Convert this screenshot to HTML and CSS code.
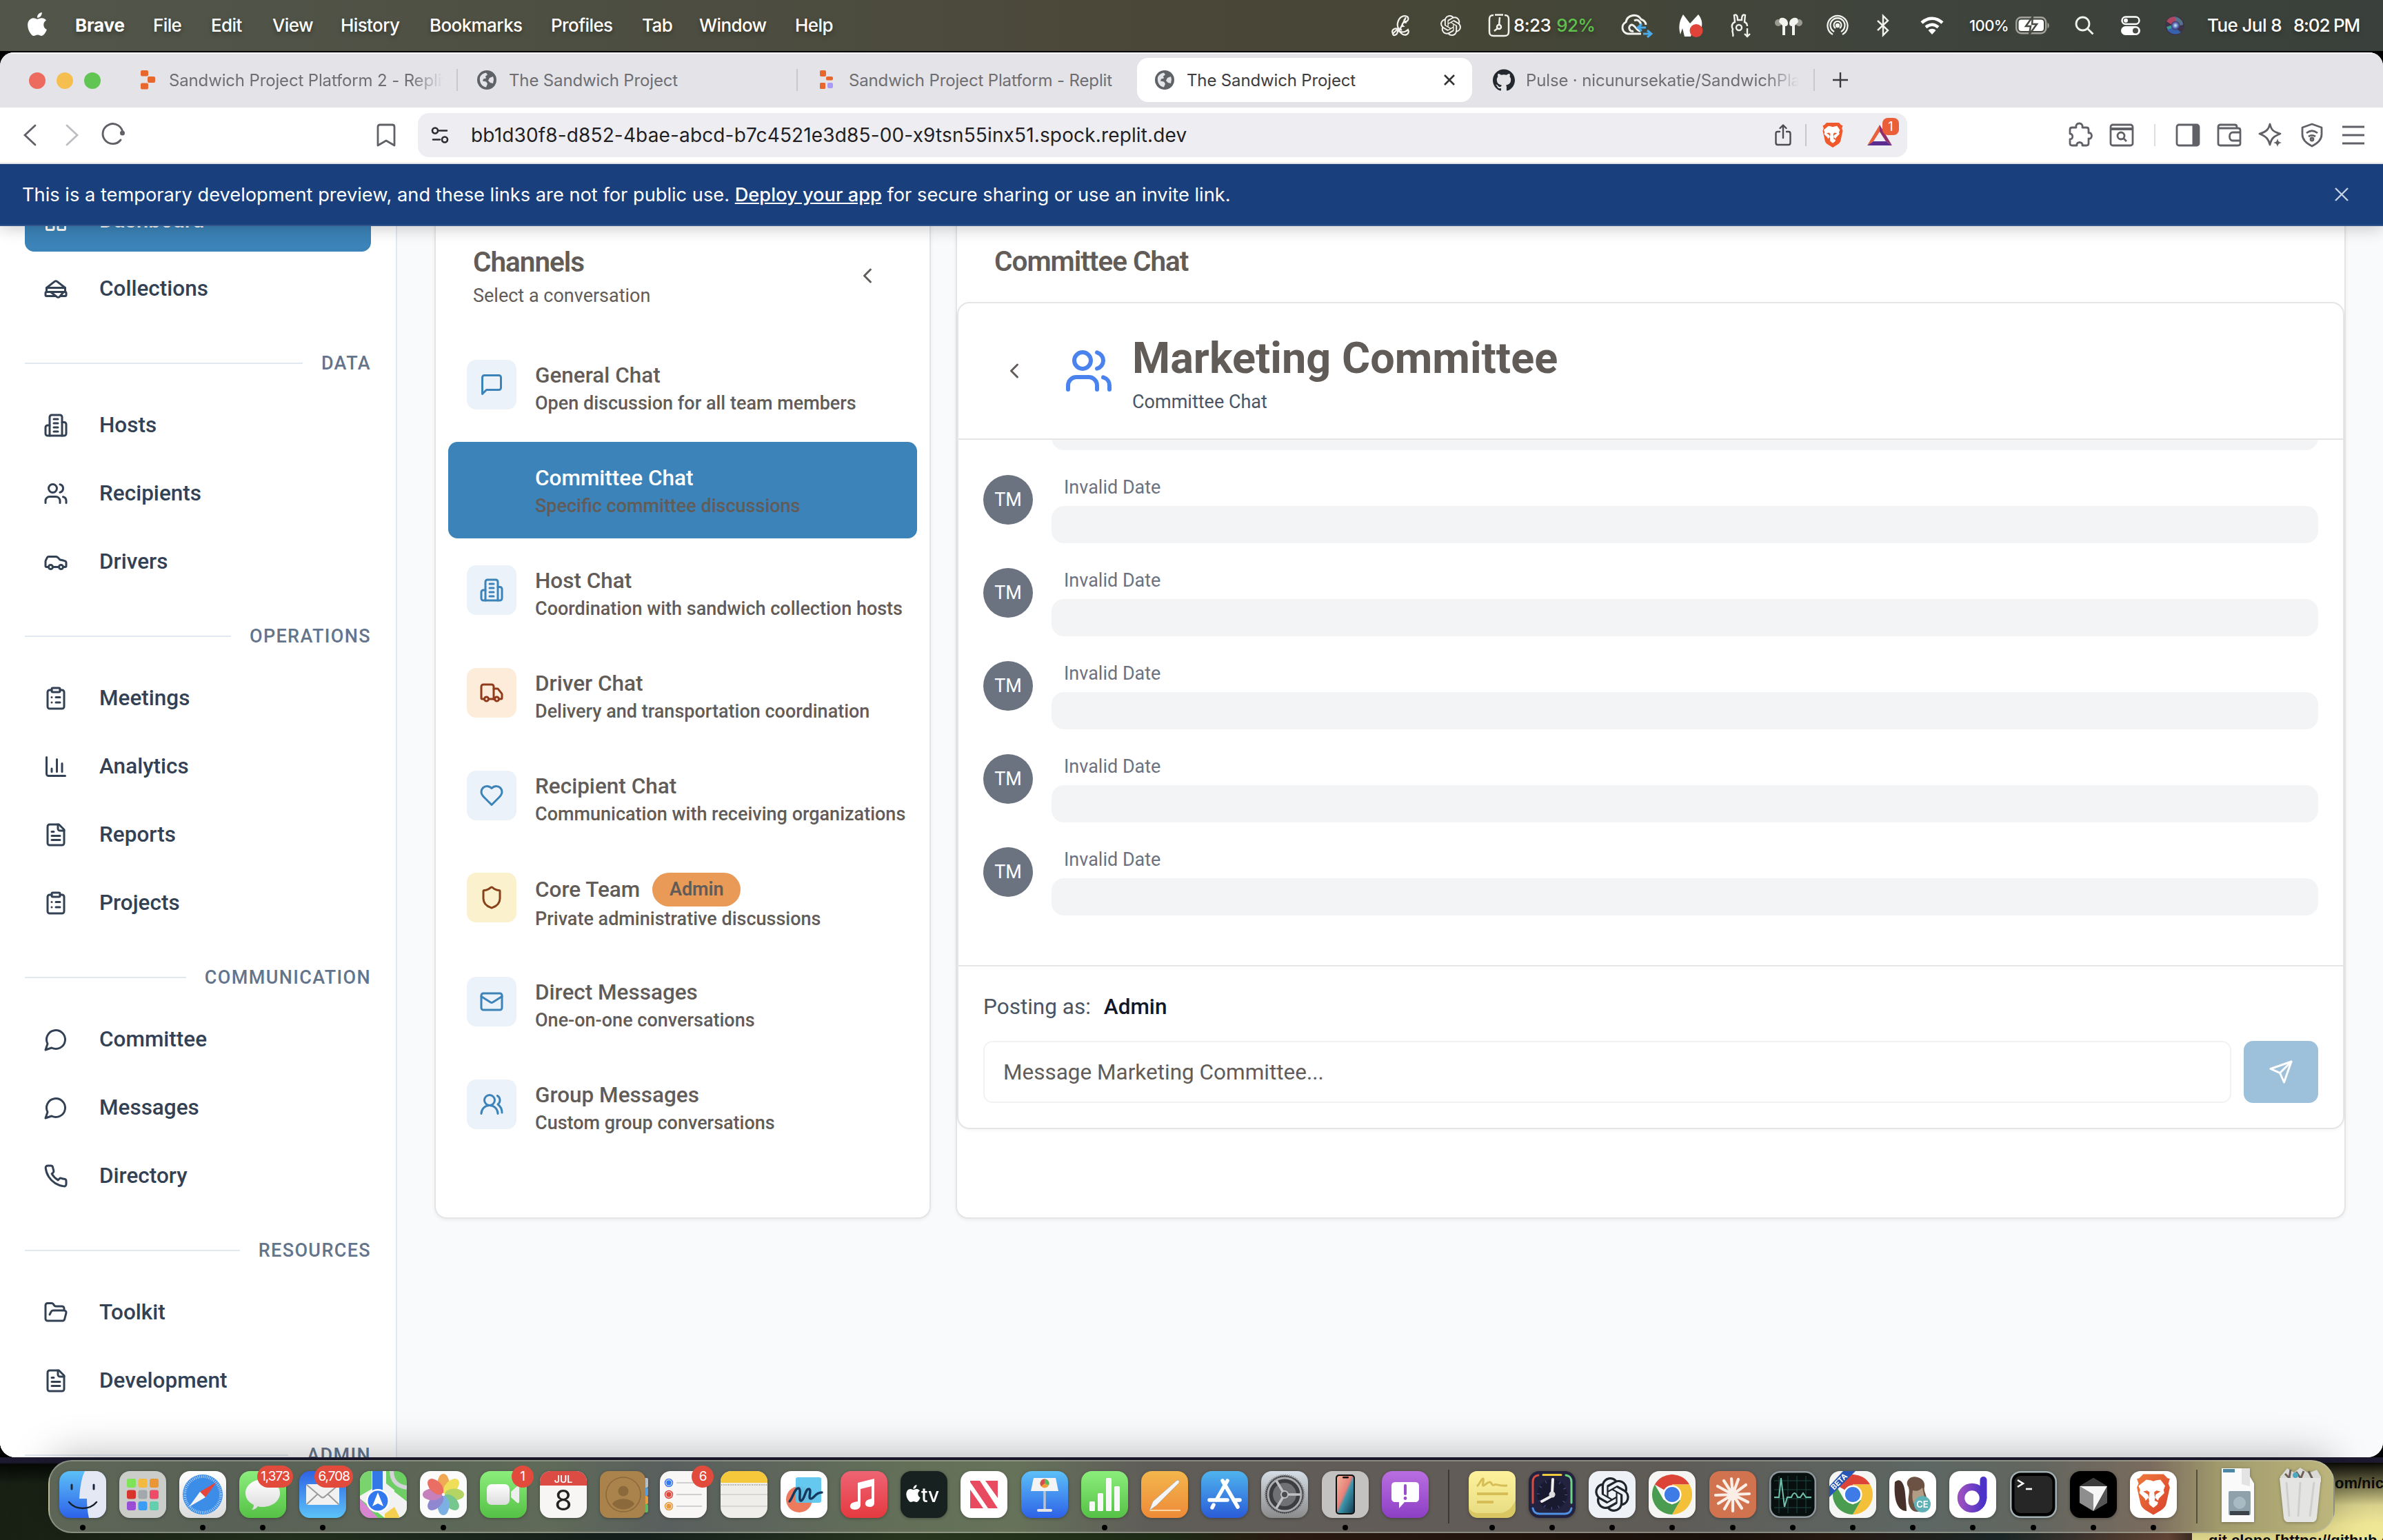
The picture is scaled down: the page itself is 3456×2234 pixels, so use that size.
FILE: index.html
```html
<!DOCTYPE html>
<html lang="en">
<head>
<meta charset="utf-8">
<title>The Sandwich Project</title>
<link rel="stylesheet" href="styles.css">
</head>
<body>
<svg class="defs" width="0" height="0" aria-hidden="true">
  <defs>
    <linearGradient id="gBlue" x1="0" y1="0" x2="0" y2="1"><stop offset="0" stop-color="#5cc0f8"/><stop offset="1" stop-color="#2d62e8"/></linearGradient>
    <linearGradient id="gMail" x1="0" y1="0" x2="0" y2="1"><stop offset="0" stop-color="#2f63e4"/><stop offset="1" stop-color="#5cc3f8"/></linearGradient>
    <linearGradient id="gGreen" x1="0" y1="0" x2="0" y2="1"><stop offset="0" stop-color="#8bee7c"/><stop offset="1" stop-color="#55c145"/></linearGradient>
    <linearGradient id="gWhite" x1="0" y1="0" x2="0" y2="1"><stop offset="0" stop-color="#ffffff"/><stop offset="1" stop-color="#dcdcdc"/></linearGradient>
    <linearGradient id="gRed" x1="0" y1="0" x2="0" y2="1"><stop offset="0" stop-color="#ee6474"/><stop offset="1" stop-color="#e5393f"/></linearGradient>
    <linearGradient id="gOrange" x1="0" y1="0" x2="0" y2="1"><stop offset="0" stop-color="#f3b64c"/><stop offset="1" stop-color="#ee8a38"/></linearGradient>
    <linearGradient id="gPurple" x1="0" y1="0" x2="0" y2="1"><stop offset="0" stop-color="#b96ee0"/><stop offset="1" stop-color="#8d3fc4"/></linearGradient>
    <linearGradient id="gStore" x1="0" y1="0" x2="0" y2="1"><stop offset="0" stop-color="#4fb4ee"/><stop offset="1" stop-color="#2a5cd8"/></linearGradient>
    <linearGradient id="gGrey" x1="0" y1="0" x2="0" y2="1"><stop offset="0" stop-color="#d5dde6"/><stop offset="1" stop-color="#8b8b8b"/></linearGradient>
    <linearGradient id="gSticky" x1="0" y1="0" x2="0" y2="1"><stop offset="0" stop-color="#fdf29b"/><stop offset="1" stop-color="#e9dd84"/></linearGradient>
    <linearGradient id="gD" x1="0" y1="0" x2="1" y2="0"><stop offset="0" stop-color="#9a4fc0"/><stop offset="1" stop-color="#4b32c8"/></linearGradient>
    <linearGradient id="gBrave" x1="0" y1="0" x2="1" y2="1"><stop offset="0" stop-color="#ee7a3c"/><stop offset="1" stop-color="#d9402c"/></linearGradient>
    <linearGradient id="gPhone" x1="0" y1="0" x2="1" y2="1"><stop offset="0" stop-color="#f6b49c"/><stop offset=".45" stop-color="#e58079"/><stop offset=".55" stop-color="#3d96ac"/><stop offset="1" stop-color="#12384e"/></linearGradient>
    <radialGradient id="gSiri"><stop offset="0" stop-color="#ffffff"/><stop offset=".3" stop-color="#8fc0e8"/><stop offset=".65" stop-color="#5560b8"/><stop offset="1" stop-color="#3c3450"/></radialGradient>
    <clipPath id="tile"><rect width="68" height="68" rx="15.5"/></clipPath>
  </defs>
  <symbol id="dash" viewBox="0 0 24 24"><rect x="3" y="3" width="7" height="9" rx="1"/><rect x="14" y="3" width="7" height="5" rx="1"/><rect x="14" y="12" width="7" height="9" rx="1"/><rect x="3" y="16" width="7" height="5" rx="1"/></symbol>
  <symbol id="sandwich" viewBox="0 0 24 24"><path d="M3 11v3a1 1 0 0 0 1 1h16a1 1 0 0 0 1-1v-3"/><path d="M12 19H3a1 1 0 0 1-1-1v-2a1 1 0 0 1 1-1h18a1 1 0 0 1 1 1v2a1 1 0 0 1-1 1h-3.83"/><path d="m3 11 7.770-6.040a2 2 0 0 1 2.460 0L21 11H3Z"/><path d="M12.970 19.770 7 15h12.500l-3.750 4.500a2 2 0 0 1-2.780.270Z"/></symbol>
  <symbol id="building" viewBox="0 0 24 24"><path d="M6 22V4a2 2 0 0 1 2-2h8a2 2 0 0 1 2 2v18Z"/><path d="M6 12H4a2 2 0 0 0-2 2v6a2 2 0 0 0 2 2h2"/><path d="M18 9h2a2 2 0 0 1 2 2v9a2 2 0 0 1-2 2h-2"/><path d="M10 6h4M10 10h4M10 14h4M10 18h4"/></symbol>
  <symbol id="users" viewBox="0 0 24 24"><path d="M16 21v-2a4 4 0 0 0-4-4H6a4 4 0 0 0-4 4v2"/><circle cx="9" cy="7" r="4"/><path d="M22 21v-2a4 4 0 0 0-3-3.87"/><path d="M16 3.13a4 4 0 0 1 0 7.75"/></symbol>
  <symbol id="car" viewBox="0 0 24 24"><path d="M19 17h2c.6 0 1-.4 1-1v-3c0-.9-.7-1.7-1.5-1.9C18.7 10.6 16 10 16 10s-1.3-1.4-2.2-2.3c-.5-.4-1.1-.7-1.8-.7H5c-.6 0-1.1.4-1.4.9l-1.4 2.9A3.7 3.7 0 0 0 2 12v4c0 .6.4 1 1 1h2"/><circle cx="7" cy="17" r="2"/><path d="M9 17h6"/><circle cx="17" cy="17" r="2"/></symbol>
  <symbol id="clip" viewBox="0 0 24 24"><rect x="8" y="2" width="8" height="4" rx="1"/><path d="M16 4h2a2 2 0 0 1 2 2v14a2 2 0 0 1-2 2H6a2 2 0 0 1-2-2V6a2 2 0 0 1 2-2h2"/><path d="M12 11h4M12 16h4M8 11h.01M8 16h.01"/></symbol>
  <symbol id="chart" viewBox="0 0 24 24"><path d="M3 3v16a2 2 0 0 0 2 2h16M18 17V9M13 17V5M8 17v-3"/></symbol>
  <symbol id="file" viewBox="0 0 24 24"><path d="M15 2H6a2 2 0 0 0-2 2v16a2 2 0 0 0 2 2h12a2 2 0 0 0 2-2V7Z"/><path d="M14 2v4a2 2 0 0 0 2 2h4M10 9H8M16 13H8M16 17H8"/></symbol>
  <symbol id="bubble" viewBox="0 0 24 24"><path d="M7.9 20A9 9 0 1 0 4 16.1L2 22Z"/></symbol>
  <symbol id="phone" viewBox="0 0 24 24"><path d="M22 16.92v3a2 2 0 0 1-2.18 2 19.79 19.79 0 0 1-8.63-3.07 19.5 19.5 0 0 1-6-6 19.79 19.79 0 0 1-3.07-8.67A2 2 0 0 1 4.11 2h3a2 2 0 0 1 2 1.72 12.84 12.84 0 0 0 .7 2.81 2 2 0 0 1-.45 2.11L8.09 9.91a16 16 0 0 0 6 6l1.27-1.27a2 2 0 0 1 2.11-.45 12.84 12.84 0 0 0 2.81.7A2 2 0 0 1 22 16.92z"/></symbol>
  <symbol id="folder" viewBox="0 0 24 24"><path d="m6 14 1.5-2.9A2 2 0 0 1 9.24 10H20a2 2 0 0 1 1.94 2.5l-1.54 6a2 2 0 0 1-1.95 1.5H4a2 2 0 0 1-2-2V5a2 2 0 0 1 2-2h3.9a2 2 0 0 1 1.69.9l.81 1.2a2 2 0 0 0 1.67.9H18a2 2 0 0 1 2 2v2"/></symbol>
  <symbol id="square" viewBox="0 0 24 24"><path d="M21 15a2 2 0 0 1-2 2H7l-4 4V5a2 2 0 0 1 2-2h14a2 2 0 0 1 2 2z"/></symbol>
  <symbol id="truck" viewBox="0 0 24 24"><path d="M14 18V6a2 2 0 0 0-2-2H4a2 2 0 0 0-2 2v11a1 1 0 0 0 1 1h2"/><path d="M15 18H9"/><path d="M19 18h2a1 1 0 0 0 1-1v-3.65a1 1 0 0 0-.22-.624l-3.48-4.35A1 1 0 0 0 17.52 8H14"/><circle cx="17" cy="18" r="2"/><circle cx="7" cy="18" r="2"/></symbol>
  <symbol id="heart" viewBox="0 0 24 24"><path d="M19 14c1.49-1.46 3-3.21 3-5.5A5.5 5.5 0 0 0 16.5 3c-1.76 0-3 .5-4.5 2-1.5-1.5-2.74-2-4.5-2A5.5 5.5 0 0 0 2 8.5c0 2.3 1.5 4.05 3 5.5l7 7Z"/></symbol>
  <symbol id="shield" viewBox="0 0 24 24"><path d="M20 13c0 5-3.5 7.5-7.66 8.95a1 1 0 0 1-.67-.01C7.5 20.5 4 18 4 13V6a1 1 0 0 1 1-1c2 0 4.5-1.2 6.24-2.72a1.17 1.17 0 0 1 1.52 0C14.51 3.81 17 5 19 5a1 1 0 0 1 1 1z"/></symbol>
  <symbol id="mail" viewBox="0 0 24 24"><rect x="2" y="4" width="20" height="16" rx="2"/><path d="m22 7-8.97 5.7a1.94 1.94 0 0 1-2.06 0L2 7"/></symbol>
  <symbol id="group" viewBox="0 0 24 24"><path d="M18 21a8 8 0 0 0-16 0"/><circle cx="10" cy="8" r="5"/><path d="M22 20c0-3.37-2-6.5-4-8a5 5 0 0 0-.45-8.3"/></symbol>
  <symbol id="send" viewBox="0 0 24 24"><path d="m22 2-7 20-4-9-9-4Z"/><path d="M22 2 11 13"/></symbol>
  <symbol id="left" viewBox="0 0 24 24"><path d="m15 18-6-6 6-6"/></symbol>
  <symbol id="apple" viewBox="0 0 24 24"><path d="M12.152 6.896c-.948 0-2.415-1.078-3.96-1.04-2.04.027-3.91 1.183-4.961 3.014-2.117 3.675-.546 9.103 1.519 12.09 1.013 1.454 2.208 3.09 3.792 3.039 1.52-.065 2.09-.987 3.935-.987 1.831 0 2.35.987 3.96.948 1.637-.026 2.676-1.48 3.676-2.948 1.156-1.688 1.636-3.325 1.662-3.415-.039-.013-3.182-1.221-3.22-4.857-.026-3.04 2.48-4.494 2.597-4.559-1.429-2.09-3.623-2.324-4.39-2.376-2-.156-3.675 1.09-4.61 1.09zM15.53 3.83c.843-1.012 1.4-2.427 1.245-3.83-1.207.052-2.662.805-3.532 1.818-.78.896-1.454 2.338-1.273 3.714 1.338.104 2.715-.688 3.559-1.701"/></symbol>
  <symbol id="knot" viewBox="0 0 24 24"><path d="M22.2819 9.8211a5.9847 5.9847 0 0 0-.5157-4.9108 6.0462 6.0462 0 0 0-6.5098-2.9A6.0651 6.0651 0 0 0 4.9807 4.1818a5.9847 5.9847 0 0 0-3.9977 2.9 6.0462 6.0462 0 0 0 .7427 7.0966 5.98 5.98 0 0 0 .511 4.9107 6.051 6.051 0 0 0 6.5146 2.9001A5.9847 5.9847 0 0 0 13.2599 24a6.0557 6.0557 0 0 0 5.7718-4.2058 5.9894 5.9894 0 0 0 3.9977-2.9001 6.0557 6.0557 0 0 0-.7475-7.0729zm-9.022 12.6081a4.4755 4.4755 0 0 1-2.8764-1.0408l.1419-.0804 4.7783-2.7582a.7948.7948 0 0 0 .3927-.6813v-6.7369l2.02 1.1686a.071.071 0 0 1 .038.052v5.5826a4.504 4.504 0 0 1-4.4945 4.4944zm-9.6607-4.1254a4.4708 4.4708 0 0 1-.5346-3.0137l.142.0852 4.783 2.7582a.7712.7712 0 0 0 .7806 0l5.8428-3.3685v2.3324a.0804.0804 0 0 1-.0332.0615L9.74 19.9502a4.4992 4.4992 0 0 1-6.1408-1.6464zM2.3408 7.8956a4.485 4.485 0 0 1 2.3655-1.9728V11.6a.7664.7664 0 0 0 .3879.6765l5.8144 3.3543-2.0201 1.1685a.0757.0757 0 0 1-.071 0l-4.8303-2.7865A4.504 4.504 0 0 1 2.3408 7.872zm16.5963 3.8558L13.1038 8.364 15.1192 7.2a.0757.0757 0 0 1 .071 0l4.8303 2.7913a4.4944 4.4944 0 0 1-.6765 8.1042v-5.6772a.79.79 0 0 0-.407-.667zm2.0107-3.0231l-.142-.0852-4.7735-2.7818a.7759.7759 0 0 0-.7854 0L9.409 9.2297V6.8974a.0662.0662 0 0 1 .0284-.0615l4.8303-2.7866a4.4992 4.4992 0 0 1 6.6802 4.66zM8.3065 12.863l-2.02-1.1638a.0804.0804 0 0 1-.038-.0567V6.0742a4.4992 4.4992 0 0 1 7.3757-3.4537l-.142.0805L8.704 5.459a.7948.7948 0 0 0-.3927.6813zm1.0976-2.3654l2.602-1.4998 2.6069 1.4998v2.9994l-2.5974 1.4997-2.6067-1.4997Z"/></symbol>
  <symbol id="github" viewBox="0 0 24 24"><path d="M12 .297c-6.63 0-12 5.373-12 12 0 5.303 3.438 9.8 8.205 11.385.6.113.82-.258.82-.577 0-.285-.01-1.04-.015-2.04-3.338.724-4.042-1.61-4.042-1.61C4.422 18.07 3.633 17.7 3.633 17.7c-1.087-.744.084-.729.084-.729 1.205.084 1.838 1.236 1.838 1.236 1.07 1.835 2.809 1.305 3.495.998.108-.776.417-1.305.76-1.605-2.665-.3-5.466-1.332-5.466-5.93 0-1.31.465-2.38 1.235-3.22-.135-.303-.54-1.523.105-3.176 0 0 1.005-.322 3.3 1.23.96-.267 1.98-.399 3-.405 1.02.006 2.04.138 3 .405 2.28-1.552 3.285-1.23 3.285-1.23.645 1.653.24 2.873.12 3.176.765.84 1.23 1.91 1.23 3.22 0 4.61-2.805 5.625-5.475 5.92.42.36.81 1.096.81 2.22 0 1.606-.015 2.896-.015 3.286 0 .315.21.69.825.57C20.565 22.092 24 17.592 24 12.297c0-6.627-5.373-12-12-12"/></symbol>
  <symbol id="globe" viewBox="0 0 28 28"><circle cx="14" cy="14" r="14" fill="#5f6368"/><path d="M4 10c2-4 5-6 9-6.500l2 3-3 2 1 3-4 1-1 3 5 1 2 3-2 5c-6-1-10-6-9-14.500zM18 11l5-2 1 4-1 6-4-1-3-3z" fill="#e4e3e8"/></symbol>
  <symbol id="lion" viewBox="0 0 44 52"><path d="M9 0h26l5 5 3 1-2 6 2 5-4 18c-1 6-3 8-7 11l-10 6-10-6c-4-3-6-5-7-11L1 17l2-5-2-6 3-1z"/><path fill="#fff" d="M13 7l6 1 3 1 3-1 6-1 6 8-2 5 1 4-7 7-1 3-4-4 1-4 6-4-5-1-3 2 1 8-1 6-3 2-3-2-1-6 1-8-3-2-5 1 6 4 1 4-4 4-1-3-7-7 1-4-2-5zM16 36l6-3 6 3-1 3-5 4-5-4z"/></symbol>
  <symbol id="chrome" viewBox="0 0 60 60"><path fill="#db4437" d="M30 30L4 15a30 30 0 0 1 52 0H30z"/><path fill="#f4c03a" d="M30 30V15h26a30 30 0 0 1-26 45l13-22.500z"/><path fill="#4a9d50" d="M30 60A30 30 0 0 1 4 15l13 22.500L30 45l13-7.500z"/><circle cx="30" cy="30" r="14" fill="#fff"/><circle cx="30" cy="30" r="11.500" fill="#3f7be6"/></symbol>
</svg>

<header class="menubar">
  <nav class="menus">
    <svg class="apple" fill="#fff"><use href="#apple"/></svg>
    <b>Brave</b><span>File</span><span>Edit</span><span>View</span><span>History</span><span>Bookmarks</span><span>Profiles</span><span>Tab</span><span>Window</span><span>Help</span>
  </nav>
  <div class="status">
    <svg width="30" height="32" viewBox="0 0 30 32" fill="none" stroke="#f2f2ee" stroke-width="2.200"><path d="M12 22C7 15 11 3 20 2c8 0 6 9 1 8-3-1-1-4 1-3M23 12c-5-2-8 2-5 5-4 0-5 4-2 6M22 4L12 24M3 28c-3-7 5-10 9-5 2 3 8 4 13-1 3 6-4 10-9 6-3-3-4-5-6-4 0 6-7 8-7 4zM3 28l9-9"/></svg>
    <svg width="30" height="30" fill="#f2f2ee"><use href="#knot"/></svg>
    <div class="timer"><svg width="32" height="34" viewBox="0 0 32 34" fill="none" stroke="#f2f2ee" stroke-width="2.500"><path d="M8 2C3 2 2 4 2 8v18c0 5 2 6 6 6h16c4 0 6-1 6-6V8c0-4-1-6-6-6M10 1.500h12M17 5l-1 12"/><circle cx="16" cy="19" r="3"/><path d="M14 21l-5 4"/></svg><span>8:23</span><span class="pct">92%</span></div>
    <svg width="46" height="34" viewBox="0 0 46 34" fill="none" stroke="#f2f2ee" stroke-width="3"><path d="M30 29H11a9 9 0 0 1-3-17A12 12 0 0 1 30 8c5 2 7 5 7 8M19 25c-6 2-9-7-3-9 5-1 7 9 13 9M20 10c5-3 9 1 10 6"/><path d="M27 20h10M33 29h10M31 15l-6 5 6 5M39 24l6 5-6 5" stroke="#4aa9e8"/></svg>
    <svg width="36" height="34" viewBox="0 0 36 34"><path fill="#fff" d="M3 30C-1 17 3 8 7 1l10 13L29 1c5 6 6 12 5 18H22l-4 14H9L6 21z"/><circle cx="26" cy="24.500" r="9.500" fill="#e04438"/></svg>
    <svg width="32" height="36" viewBox="0 0 32 36" fill="none" stroke="#f2f2ee" stroke-width="2.400"><path d="M5 34c2-4-2-6 0-11-3-5 0-9 3-10L7 3c4-2 5 2 5 7h6c0-5 1-9 5-7l-1 10c3 1 4 4 4 6"/><circle cx="14" cy="21" r="4"/><path d="M10 16h.1M19 16h.1M26 22v11M22 30l4 4 4-4"/></svg>
    <svg width="40" height="30" viewBox="0 0 40 30" fill="#f2f2ee"><circle cx="5" cy="11" r="5" fill="#9a9a90"/><circle cx="35" cy="11" r="5" fill="#9a9a90"/><path d="M7 5a8 8 0 0 1 12 7c0 3-2 4-4 4v13h-4V15L6 10zM33 5a8 8 0 0 0-12 7c0 3 2 4 4 4v13h4V15l5-5z"/></svg>
    <svg width="32" height="32" viewBox="0 0 32 32" fill="none" stroke="#f2f2ee" stroke-width="2.300"><path d="M9 29A14.500 14.500 0 1 1 23 29M11 25a10.500 10.500 0 1 1 10 0M13 20a5.500 5.500 0 1 1 6 0"/><circle cx="16" cy="16" r="2" fill="#f2f2ee"/></svg>
    <svg width="20" height="32" viewBox="0 0 20 32" fill="none" stroke="#f2f2ee" stroke-width="2.400"><path d="M2 9l15 14-7 7V2l7 7L2 23"/></svg>
    <svg width="34" height="26" viewBox="0 0 34 26" fill="none" stroke="#fff" stroke-width="4.500"><path d="M2 9c9-8.500 21-8.500 30 0M8 15.500c6-5 12-5 18 0"/><path fill="#fff" stroke="none" d="M17 26l-5.500-6c3-3 8-3 11 0z"/></svg>
    <div class="batt"><span>100%</span><svg width="50" height="26" viewBox="0 0 50 26"><rect x="1.200" y="1.200" width="43" height="23" rx="7" fill="none" stroke="#a4a49c" stroke-width="2.400"/><rect x="4.500" y="4.500" width="36.500" height="16.500" rx="4" fill="#fff"/><path d="M46.500 9v8c3-1 3-7 0-8z" fill="#a4a49c"/><path d="M25 0L15 14h7l-2 12 11-15h-7z" fill="#fff" stroke="#454a42" stroke-width="2.500"/></svg></div>
    <svg width="28" height="28" viewBox="0 0 28 28" fill="none" stroke="#f2f2ee" stroke-width="2.800"><circle cx="11.500" cy="11.500" r="9.500"/><path d="M18.500 18.500l8 8"/></svg>
    <svg width="28" height="28" viewBox="0 0 28 28"><rect x="1.500" y="1.500" width="25" height="10.500" rx="5.200" fill="none" stroke="#fff" stroke-width="2.500"/><circle cx="7" cy="6.800" r="3" fill="#fff"/><rect y="15" width="28" height="13" rx="6.500" fill="#fff"/><circle cx="21" cy="21.500" r="4" fill="#454a42"/></svg>
    <svg width="28" height="28" viewBox="0 0 28 28"><circle cx="14" cy="14" r="14" fill="#3c3446"/><path d="M2 8A14 14 0 0 1 14 1l4 10-8 2z" fill="#d84c6c" opacity=".75"/><path d="M14 1c7 1 12 6 12 12l-8 2z" fill="#5d8fa8" opacity=".7"/><path d="M3 20l8-6 12 10a14 14 0 0 1-20-4z" fill="#3566b8" opacity=".9"/><path d="M2 16l9-3 2 3-9 4z" fill="#3fb5a0" opacity=".8"/><circle cx="15" cy="14" r="6.500" fill="url(#gSiri)" opacity=".9"/></svg>
    <div class="date"><span>Tue Jul 8</span><span class="clock">8:02 PM</span></div>
  </div>
</header>

<main class="window">
  <div class="tabstrip">
    <div class="lights"><i class="red"></i><i class="yel"></i><i class="grn"></i></div>
    <div class="tab first"><svg width="32" height="28" viewBox="0 0 32 28" fill="#e8672c"><rect x="5" width="11" height="8.500" rx="2"/><rect x="15" y="9" width="11" height="9" rx="2"/><rect x="5" y="18.500" width="11" height="9" rx="2"/></svg><span class="fade">Sandwich Project Platform 2 - Replit</span></div>
    <div class="tab sep"><svg width="28" height="28"><use href="#globe"/></svg><span>The Sandwich Project</span></div>
    <div class="tab sep"><svg width="28" height="28" viewBox="0 0 28 28" fill="#e8672c"><rect x="4" width="9" height="9" rx="2"/><rect x="13" y="9" width="10" height="5.500" rx="2"/><rect x="4" y="18" width="8" height="9" rx="1.500"/><rect x="15" y="18" width="8" height="8" rx="2" fill="#a99af5"/></svg><span>Sandwich Project Platform - Replit</span></div>
    <div class="tab active"><svg width="28" height="28"><use href="#globe"/></svg><span>The Sandwich Project</span><svg class="x" width="16" height="16" viewBox="0 0 16 16" fill="none" stroke="#333" stroke-width="2.600"><path d="M1 1l14 14M15 1L1 15"/></svg></div>
    <div class="tab last"><svg width="32" height="32" fill="#24292f"><use href="#github"/></svg><span class="fade">Pulse · nicunursekatie/SandwichPlatform</span></div>
    <svg class="plus" width="22" height="22" viewBox="0 0 22 22" stroke="#3a3a3e" stroke-width="2.400"><path d="M11 0v22M0 11h22"/></svg>
  </div>
  <div class="toolbar">
    <div class="navs">
      <svg width="60" height="36" viewBox="0 0 60 36" fill="none" stroke="#5f6166" stroke-width="2.800" stroke-linecap="round"><path d="M37 4L22 18l15 14"/></svg>
      <svg width="60" height="36" viewBox="0 0 60 36" fill="none" stroke="#bdbdc2" stroke-width="2.800" stroke-linecap="round"><path d="M23 4l15 14-15 14"/></svg>
      <svg width="60" height="36" viewBox="0 0 60 36" fill="none" stroke="#5f6166" stroke-width="2.900" stroke-linecap="round"><path d="M41 25a14.500 14.500 0 1 1 3-10"/><circle cx="43.500" cy="15" r="3.500" fill="#5f6166" stroke="none"/></svg>
    </div>
    <svg class="bm" width="28" height="34" viewBox="0 0 28 34" fill="none" stroke="#5f6166" stroke-width="2.800" stroke-linejoin="round"><path d="M2 32V5c0-2 1-3 3-3h18c2 0 3 1 3 3v27L14 25z"/></svg>
    <div class="url">
      <svg width="26" height="24" viewBox="0 0 26 24" fill="none" stroke="#2b2b30" stroke-width="2.600" stroke-linecap="round"><circle cx="6" cy="5.500" r="4"/><path d="M12 5.500h11M3 18.500h10"/><circle cx="20" cy="18.500" r="4"/></svg>
      <span class="addr">bb1d30f8-d852-4bae-abcd-b7c4521e3d85-00-x9tsn55inx51.spock.replit.dev</span>
      <svg class="share" width="24" height="32" viewBox="0 0 24 32" fill="none" stroke="#4a4c52" stroke-width="2.400" stroke-linecap="round" stroke-linejoin="round"><path d="M7 11H4c-2 0-2.500 1-2.500 3v13c0 2 .5 3 2.500 3h16c2 0 2.500-1 2.500-3V14c0-2-.5-3-2.500-3h-3M12 20V2M7.500 6L12 1.500 16.500 6"/></svg>
      <i class="bar"></i>
      <svg class="lion" width="32" height="36" fill="#f0592b"><use href="#lion"/></svg>
      <span class="bat"><svg width="36" height="30" viewBox="0 0 36 30"><path fill="#e9613b" d="M18 0L0 30l9-6 9-14z"/><path fill="#8f2f6b" d="M18 0l18 30-9-6-9-14z"/><path fill="#5c2d91" d="M0 30l9-6h18l9 6z"/></svg><em>1</em></span>
    </div>
    <div class="exts">
      <svg width="36" height="36" viewBox="0 0 36 36"><path d="M3 10c0-2 1-3 3-3h6c-2-8 11-8 9 0h6c2 0 3 1 3 3v5c6-2 6 10 0 8v7c0 2-1 3-3 3h-6c1-6-9-6-8 0H6c-2 0-3-1-3-3v-6c5 0 5-8 0-8z"/></svg>
      <svg width="36" height="36" viewBox="0 0 36 36"><rect x="2" y="3" width="32" height="30" rx="3"/><path d="M2 9h32" stroke-width="4"/><circle cx="17" cy="19" r="5"/><path d="M21 23l4 4"/></svg>
      <i class="bar"></i>
      <svg width="36" height="36" viewBox="0 0 36 36"><rect x="2" y="3" width="32" height="30" rx="3"/><path d="M29 4v28" stroke-width="9"/></svg>
      <svg width="36" height="36" viewBox="0 0 36 36"><path d="M34 14v-3c0-2-1-3-3-3H2V6c0-2 1-3 3-3h21c2 0 3 1 3 3v2M2 8v22c0 2 1 3 3 3h26c2 0 3-1 3-3v-3M34 14H23c-6 0-6 12 0 12h11z"/></svg>
      <svg width="36" height="36" viewBox="0 0 36 36"><path d="M17 2c2 8 4 11 15 14-11 4-13 8-15 16-2-8-5-12-15-16C12 13 15 10 17 2z"/><path d="M28 23c1 4 2 5 6 6-4 1-5 2-6 6-1-4-2-5-6-6 4-1 5-2 6-6z" fill="#5f6166" stroke="none"/></svg>
      <svg width="36" height="36" viewBox="0 0 36 36"><path d="M18 2l14 5v10c0 8-6 13-14 17C10 30 4 25 4 17V7z"/><path d="M10 15c5-4 11-4 16 0M13 20c3-2 7-2 10 0"/><circle cx="18" cy="24" r="2"/></svg>
      <svg width="36" height="36" viewBox="0 0 36 36"><path d="M2 6h32M2 18h32M2 30h32"/></svg>
    </div>
  </div>

  <div class="page">
    <div class="banner"><p>This is a temporary development preview, and these links are not for public use. <a>Deploy your app</a> for secure sharing or use an invite link.</p><svg width="20" height="20" viewBox="0 0 20 20" stroke="#c6d2e4" stroke-width="2.400"><path d="M1 1l18 18M19 1L1 19"/></svg></div>
    <aside class="side">
      <a class="item on"><svg class="ic"><use href="#dash"/></svg>Dashboard</a>
      <a class="item"><svg class="ic"><use href="#sandwich"/></svg>Collections</a>
      <h6>DATA</h6>
      <a class="item"><svg class="ic"><use href="#building"/></svg>Hosts</a>
      <a class="item"><svg class="ic"><use href="#users"/></svg>Recipients</a>
      <a class="item"><svg class="ic"><use href="#car"/></svg>Drivers</a>
      <h6>OPERATIONS</h6>
      <a class="item"><svg class="ic"><use href="#clip"/></svg>Meetings</a>
      <a class="item"><svg class="ic"><use href="#chart"/></svg>Analytics</a>
      <a class="item"><svg class="ic"><use href="#file"/></svg>Reports</a>
      <a class="item"><svg class="ic"><use href="#clip"/></svg>Projects</a>
      <h6>COMMUNICATION</h6>
      <a class="item"><svg class="ic"><use href="#bubble"/></svg>Committee</a>
      <a class="item"><svg class="ic"><use href="#bubble"/></svg>Messages</a>
      <a class="item"><svg class="ic"><use href="#phone"/></svg>Directory</a>
      <h6>RESOURCES</h6>
      <a class="item"><svg class="ic"><use href="#folder"/></svg>Toolkit</a>
      <a class="item"><svg class="ic"><use href="#file"/></svg>Development</a>
      <h6>ADMIN</h6>
    </aside>
    <section class="content">
      <div class="card channels">
        <div class="chead"><div><h3>Channels</h3><p>Select a conversation</p></div><svg class="ic"><use href="#left"/></svg></div>
        <div class="rows">
          <div class="row"><span class="box"><svg class="ic"><use href="#square"/></svg></span><div><h4>General Chat</h4><p>Open discussion for all team members</p></div></div>
          <div class="row sel"><span class="box"></span><div><h4>Committee Chat</h4><p>Specific committee discussions</p></div></div>
          <div class="row"><span class="box"><svg class="ic"><use href="#building"/></svg></span><div><h4>Host Chat</h4><p>Coordination with sandwich collection hosts</p></div></div>
          <div class="row"><span class="box orange"><svg class="ic"><use href="#truck"/></svg></span><div><h4>Driver Chat</h4><p>Delivery and transportation coordination</p></div></div>
          <div class="row"><span class="box"><svg class="ic"><use href="#heart"/></svg></span><div><h4>Recipient Chat</h4><p>Communication with receiving organizations</p></div></div>
          <div class="row"><span class="box yellow"><svg class="ic"><use href="#shield"/></svg></span><div><h4>Core Team <span class="badge">Admin</span></h4><p>Private administrative discussions</p></div></div>
          <div class="row"><span class="box"><svg class="ic"><use href="#mail"/></svg></span><div><h4>Direct Messages</h4><p>One-on-one conversations</p></div></div>
          <div class="row"><span class="box"><svg class="ic"><use href="#group"/></svg></span><div><h4>Group Messages</h4><p>Custom group conversations</p></div></div>
        </div>
      </div>
      <div class="card chat">
        <h3>Committee Chat</h3>
        <div class="inner">
          <div class="ihead"><svg class="ic"><use href="#left"/></svg><svg class="ic big"><use href="#users"/></svg><div><h2>Marketing Committee</h2><p>Committee Chat</p></div></div>
          <div class="msgs">
            <div class="msg"><span class="av">TM</span><div><small>Invalid Date</small><p></p></div></div>
            <div class="msg"><span class="av">TM</span><div><small>Invalid Date</small><p></p></div></div>
            <div class="msg"><span class="av">TM</span><div><small>Invalid Date</small><p></p></div></div>
            <div class="msg"><span class="av">TM</span><div><small>Invalid Date</small><p></p></div></div>
            <div class="msg"><span class="av">TM</span><div><small>Invalid Date</small><p></p></div></div>
            <div class="msg"><span class="av">TM</span><div><small>Invalid Date</small><p></p></div></div>
          </div>
          <div class="compose">
            <div class="as"><span>Posting as:</span><b>Admin</b></div>
            <div class="line"><div class="input">Message Marketing Committee...</div><div class="btn"><svg class="ic"><use href="#send"/></svg></div></div>
          </div>
        </div>
      </div>
    </section>
  </div>
</main>

<div class="desk"><div class="sticky"><p>om/nicunurse</p><p class="git">git clone [https://github.com</p></div></div>

<footer class="dock">
  <div class="app run"><svg viewBox="0 0 68 68"><g clip-path="url(#tile)"><rect width="68" height="68" fill="url(#gBlue)"/><path d="M37 0h31v68H43c-2-8-3-18-3-28H29C30 25 32 10 37 0z" fill="#e3e8f4"/></g><path d="M18 20v6M50 20v6" stroke="#1c2838" stroke-width="3" stroke-linecap="round"/><path d="M14 45c10 12 30 12 40 0" fill="none" stroke="#14202e" stroke-width="2.500" stroke-linecap="round"/></svg></div>
  <div class="app"><svg viewBox="0 0 68 68"><rect width="68" height="68" rx="15.500" fill="#cbcdcb"/><g><rect x="11" y="11" width="13" height="13" rx="3" fill="#7ee357"/><rect x="27.500" y="11" width="13" height="13" rx="3" fill="#f4b93f"/><rect x="44" y="11" width="13" height="13" rx="3" fill="#ea9634"/><rect x="11" y="27.500" width="13" height="13" rx="3" fill="#d8362c"/><rect x="27.500" y="27.500" width="13" height="13" rx="3" fill="#a3a8ac"/><rect x="44" y="27.500" width="13" height="13" rx="3" fill="#ee4d68"/><rect x="11" y="44" width="13" height="13" rx="3" fill="#9a4ed6"/><rect x="27.500" y="44" width="13" height="13" rx="3" fill="#3d9cf4"/><rect x="44" y="44" width="13" height="13" rx="3" fill="#62cfae"/></g></svg></div>
  <div class="app run"><svg viewBox="0 0 68 68"><rect width="68" height="68" rx="15.500" fill="url(#gWhite)"/><circle cx="34" cy="34" r="29" fill="#3b8de8"/><circle cx="34" cy="34" r="26" fill="none" stroke="#cfe4fa" stroke-width="4" stroke-dasharray=".8 1.920"/><path d="M54 16L38 38l-8-8z" fill="#e8453a"/><path d="M14 52l16-22 8 8z" fill="#f3f3f3"/></svg></div>
  <div class="app run"><svg viewBox="0 0 68 68"><rect width="68" height="68" rx="15.500" fill="url(#gGreen)"/><path d="M34 12c14 0 25 9 25 20S48 52 34 52c-3 0-5 0-7-1-2 3-5 5-9 5 2-2 3-4 3-7C13 45 9 39 9 32c0-11 11-20 25-20z" fill="url(#gWhite)"/></svg><em>1,373</em></div>
  <div class="app run"><svg viewBox="0 0 68 68"><rect width="68" height="68" rx="15.500" fill="url(#gMail)"/><rect x="10" y="19" width="48" height="30" rx="3" fill="#f1f1f1"/><path d="M11 20l20 17c2 2 4 2 6 0l20-17M11 48l16-15M57 48L41 33" fill="none" stroke="#9b9b9b" stroke-width="2"/></svg><em>6,708</em></div>
  <div class="app"><svg viewBox="0 0 68 68"><g clip-path="url(#tile)"><rect width="68" height="68" fill="#6bcf62"/><path d="M18 0h32v30l18 14v24H36L0 40V0z" fill="#f2f2f2"/><path d="M0 0h17v26L0 36z" fill="#7ad46e"/><path d="M38 0h14l4 10 12 10v22L38 18z" fill="#6fce66"/><path d="M0 40l26 28H0z" fill="#d886d2"/><path d="M36 62l14-10 8 16H36z" fill="#f5cf4e"/><path d="M18 0h15v30H18z" fill="#3478e8"/><path d="M46 0c0 14 8 22 22 24" fill="none" stroke="#d3d3d8" stroke-width="6"/></g><circle cx="26" cy="43" r="17" fill="#fff"/><circle cx="26" cy="43" r="14.500" fill="#3478f0"/><path d="M26 31l8 20-8-4-8 4z" fill="#fff"/></svg></div>
  <div class="app run"><svg viewBox="0 0 68 68"><rect width="68" height="68" rx="15.500" fill="#fbfbfb"/><g opacity=".85"><ellipse cx="34" cy="18" rx="8.500" ry="14" fill="#f09a38"/><ellipse cx="34" cy="18" rx="8.500" ry="14" fill="#ecd93c" transform="rotate(45 34 34)"/><ellipse cx="34" cy="18" rx="8.500" ry="14" fill="#a8cf4a" transform="rotate(90 34 34)"/><ellipse cx="34" cy="18" rx="8.500" ry="14" fill="#5fbd7e" transform="rotate(135 34 34)"/><ellipse cx="34" cy="18" rx="8.500" ry="14" fill="#66a3df" transform="rotate(180 34 34)"/><ellipse cx="34" cy="18" rx="8.500" ry="14" fill="#7d75c9" transform="rotate(225 34 34)"/><ellipse cx="34" cy="18" rx="8.500" ry="14" fill="#bd6bb0" transform="rotate(270 34 34)"/><ellipse cx="34" cy="18" rx="8.500" ry="14" fill="#e8564a" transform="rotate(315 34 34)"/></g></svg></div>
  <div class="app"><svg viewBox="0 0 68 68"><rect width="68" height="68" rx="15.500" fill="url(#gGreen)"/><rect x="10" y="19" width="33" height="30" rx="7" fill="url(#gWhite)"/><path d="M45 30l9-8c2-1 3 0 3 2v20c0 2-1 3-3 2l-9-8z" fill="#eee"/></svg><em>1</em></div>
  <div class="app"><svg viewBox="0 0 68 68"><rect width="68" height="68" rx="15.500" fill="#f7f6f4"/><path d="M0 21V15.500A15.500 15.500 0 0 1 15.500 0h37A15.500 15.500 0 0 1 68 15.500V21z" fill="#dc4c45"/><text x="34" y="16.500" class="t" font-size="14" font-weight="600" fill="#fff" text-anchor="middle">JUL</text><text x="34" y="57" class="t" font-size="41" fill="#222" text-anchor="middle">8</text></svg></div>
  <div class="app"><svg viewBox="0 0 68 68"><rect x="55" y="10" width="15" height="14" rx="2" fill="#b9c0c4"/><rect x="55" y="24" width="15" height="12" rx="2" fill="#5a9bd8"/><rect x="55" y="36" width="15" height="12" rx="2" fill="#e89a3c"/><rect x="55" y="48" width="15" height="12" rx="2" fill="#62b85c"/><rect width="66" height="68" rx="13" fill="#a9824c"/><circle cx="34" cy="34" r="25" fill="none" stroke="#8b693a" stroke-width="1.500"/><circle cx="34" cy="29" r="7.500" fill="#8b693a"/><path d="M18 48c3-10 29-10 32 0-8 10-24 10-32 0z" fill="#8b693a"/></svg></div>
  <div class="app"><svg viewBox="0 0 68 68"><rect width="68" height="68" rx="15.500" fill="#f8f7f5"/><g fill="none" stroke-width="1.500"><circle cx="13" cy="17" r="5.500" stroke="#3478f0"/><circle cx="13" cy="34" r="5.500" stroke="#e0453a"/><circle cx="13" cy="51" r="5.500" stroke="#e89a3c"/></g><circle cx="13" cy="17" r="3.700" fill="#3478f0"/><circle cx="13" cy="34" r="3.700" fill="#e0453a"/><circle cx="13" cy="51" r="3.700" fill="#e89a3c"/><path d="M24 17h37M24 34h37M24 51h37" stroke="#c4c4c4" stroke-width="1.500"/></svg><em>6</em></div>
  <div class="app"><svg viewBox="0 0 68 68"><rect width="68" height="68" rx="15.500" fill="#efeeea"/><path d="M0 17V15.500A15.500 15.500 0 0 1 15.500 0h37A15.500 15.500 0 0 1 68 15.500V17z" fill="#f5c83c"/><path d="M1 20h66" stroke="#999" stroke-width="2" stroke-dasharray="1 1.500"/><path d="M0 34h68M0 51h68" stroke="#d0d0cc" stroke-width="1.500"/></svg></div>
  <div class="app"><svg viewBox="0 0 68 68"><rect width="68" height="68" rx="15.500" fill="#fff"/><circle cx="27" cy="41" r="19" fill="#ee7a5e"/><rect x="22" y="9" width="37" height="37" rx="3" fill="#58c4ee" opacity=".92"/><path d="M13 44c5-6 8-20 13-19s-1 19 4 18 6-18 11-17-2 14 3 14 6-9 16-9" fill="none" stroke="#163a5e" stroke-width="3.500" stroke-linecap="round"/></svg></div>
  <div class="app"><svg viewBox="0 0 68 68"><rect width="68" height="68" rx="15.500" fill="url(#gRed)"/><path d="M25 17l24-6v35c0 4-3 6-7 6s-7-3-6-6c1-4 5-5 9-6V22l-16 4v23c0 4-3 7-8 7s-8-3-7-6c1-4 5-5 11-6z" fill="#fff"/></svg></div>
  <div class="app"><svg viewBox="0 0 68 68"><rect width="68" height="68" rx="15.500" fill="#17211f"/><svg x="6" y="20" width="25" height="25" fill="#fff"><use href="#apple"/></svg><text x="30" y="45" class="t" font-size="28" font-weight="500" fill="#fff">tv</text></svg></div>
  <div class="app"><svg viewBox="0 0 68 68"><rect width="68" height="68" rx="15.500" fill="#fff"/><path d="M14 14h14l26 40H40L14 16zM36 14h18v25zM14 27v27h19z" fill="#e84a5f"/></svg></div>
  <div class="app"><svg viewBox="0 0 68 68"><rect width="68" height="68" rx="15.500" fill="url(#gBlue)"/><path d="M18 10h32l4 19H14z" fill="#f4f4f4"/><circle cx="34" cy="18" r="6.500" fill="#f0a03c"/><path d="M34 18v-6.500a6.500 6.500 0 0 1 6 9z" fill="#5db85c"/><path d="M34 18l-5 4a6.500 6.500 0 0 1 5-10.500z" fill="#d6504a"/><path d="M34 29v27" stroke="#b9c4cf" stroke-width="3.500"/><rect x="23" y="55" width="22" height="4" rx="2" fill="#e6e6e6"/></svg></div>
  <div class="app run"><svg viewBox="0 0 68 68"><rect width="68" height="68" rx="15.500" fill="url(#gGreen)"/><g fill="#f8f8f8"><rect x="12" y="44" width="8" height="14" rx="1.500"/><rect x="24" y="32" width="8" height="26" rx="1.500"/><rect x="36" y="10" width="8" height="48" rx="1.500"/><rect x="48" y="22" width="8" height="36" rx="1.500"/></g></svg></div>
  <div class="app"><svg viewBox="0 0 68 68"><rect width="68" height="68" rx="15.500" fill="url(#gOrange)"/><path d="M12 57h45" stroke="#fbd5a4" stroke-width="2"/><path d="M12 57l5-13 33-29c3-3 6-2 5 2L22 50z" fill="#f6f6f6" stroke="#aaa" stroke-width=".8"/></svg></div>
  <div class="app"><svg viewBox="0 0 68 68"><rect width="68" height="68" rx="15.500" fill="url(#gStore)"/><path d="M31 14l22 38M38 14L22 42M12 42h26M47 42h9M18 49l-2 4" stroke="#fff" stroke-width="5.500" stroke-linecap="round"/></svg></div>
  <div class="app"><svg viewBox="0 0 68 68"><rect width="68" height="68" rx="15.500" fill="url(#gGrey)"/><circle cx="34" cy="34" r="28" fill="#3c3d40"/><circle cx="34" cy="34" r="24" fill="none" stroke="#a9abae" stroke-width="3"/><circle cx="34" cy="34" r="28" fill="none" stroke="#8d8f92" stroke-width="3" stroke-dasharray="1.500 1.500"/><circle cx="34" cy="34" r="17" fill="#6f7174"/><path d="M34 34h23M34 34L22 14M34 34L22 54" stroke="#bfc1c4" stroke-width="3.500"/><circle cx="34" cy="34" r="5" fill="#4a4b4e" stroke="#bfc1c4" stroke-width="2"/></svg></div>
  <div class="app run"><svg viewBox="0 0 68 68"><rect width="68" height="68" rx="15.500" fill="#c4c2c1"/><rect x="20" y="5" width="28" height="58" rx="5" fill="#111"/><rect x="22" y="7" width="24" height="54" rx="3.500" fill="url(#gPhone)"/><rect x="30" y="8" width="9" height="2.500" rx="1.200" fill="#111"/></svg></div>
  <div class="app"><svg viewBox="0 0 68 68"><rect width="68" height="68" rx="15.500" fill="url(#gPurple)"/><path d="M20 16h28c4 0 6 2 6 6v17c0 4-2 6-6 6H33l-8 9v-9h-5c-4 0-6-2-6-6V22c0-4 2-6 6-6z" fill="#fff"/><path d="M34 21v12" stroke="#9a4ecb" stroke-width="4" stroke-linecap="round"/><circle cx="34" cy="39.500" r="2.400" fill="#9a4ecb"/></svg></div>
  <i class="div"></i>
  <div class="app run"><svg viewBox="0 0 68 68"><rect width="68" height="68" rx="13" fill="#d9c764"/><path d="M13 0h42c8 0 13 5 13 13v29C64 52 56 60 46 61H13C5 61 0 56 0 48V13C0 5 5 0 13 0z" fill="url(#gSticky)"/><path d="M12 22c4-3 7-12 9-11s-3 12 1 10 6-6 9-5 2 6 6 4 4 2 19 1" fill="none" stroke="#d6bd55" stroke-width="3"/><path d="M12 33h45M12 45h24" stroke="#d6bd55" stroke-width="4"/></svg></div>
  <div class="app run"><svg viewBox="0 0 68 68"><rect width="68" height="68" rx="15.500" fill="#23233f"/><circle cx="34" cy="34" r="22" fill="#191930"/><circle cx="34" cy="34" r="20" fill="none" stroke="#4a5a90" stroke-width="4" stroke-dasharray="1 9.500"/><g fill="none" stroke-width="3" stroke-linecap="round"><path d="M14 6C8 7 6 10 6 16v30" stroke="#d64e42"/><path d="M21 5.500h26" stroke="#eecb3c"/><path d="M54 6c6 1 8 4 8 10v30" stroke="#6bd486"/><path d="M6 54c1 5 4 8 10 8h36c6 0 9-3 10-8" stroke="#4f92e6"/></g><path d="M35 12l-1 20M32 37l-13 7" stroke="#eee" stroke-width="4" stroke-linecap="round"/><circle cx="34" cy="34" r="4.500" fill="#ddd"/></svg></div>
  <div class="app run"><svg viewBox="0 0 68 68"><rect width="68" height="68" rx="15.500" fill="#eef1f6"/><svg x="9" y="9" width="50" height="50" fill="#20252b"><use href="#knot"/></svg></svg></div>
  <div class="app run"><svg viewBox="0 0 68 68"><rect width="68" height="68" rx="15.500" fill="#f5f5f3"/><svg x="5" y="5" width="58" height="58"><use href="#chrome"/></svg></svg></div>
  <div class="app run"><svg viewBox="0 0 68 68"><rect width="68" height="68" rx="15.500" fill="#d2734f"/><g stroke="#fbeee6" stroke-width="4.200" stroke-linecap="round"><path d="M34 34L32 11M34 34L42 12M34 34L53 20M34 34L58 33M34 34L56 45M34 34L47 54M34 34L34 58M34 34L22 55M34 34L13 47M34 34L9 35M34 34L12 22M34 34L21 14"/></g></svg></div>
  <div class="app run"><svg viewBox="0 0 68 68"><rect width="68" height="68" rx="15.500" fill="#8e979b"/><rect x="2.500" y="2.500" width="63" height="63" rx="13" fill="#07100f"/><path d="M7 14h54M7 27h54M7 40h54M7 53h54M14 7v54M27 7v54M40 7v54M53 7v54" stroke="#1f4a42" stroke-width="1"/><path d="M7 38h7l3-28 5 42 4-14h6c3-8 6-8 9 0h4l4-6 4 6h8" fill="none" stroke="#6fc2ad" stroke-width="2"/></svg></div>
  <div class="app run"><svg viewBox="0 0 68 68"><g clip-path="url(#tile)"><rect width="68" height="68" fill="#f5f5f3"/><svg x="5" y="5" width="58" height="58"><use href="#chrome"/></svg><path d="M0 22V38L38 0H20z" fill="#2856b4"/><text transform="translate(7 28) rotate(-45)" class="t" font-size="11" font-weight="700" fill="#fff">BETA</text></g></svg></div>
  <div class="app run"><svg viewBox="0 0 68 68"><rect width="68" height="68" rx="15.500" fill="#fff"/><path d="M8 16c8-8 14 2 15 16 1 12 2 20 2 26C12 58 6 42 8 16z" fill="#46322a"/><path d="M26 20c-2-9 8-14 15-11 8 2 11 8 10 14-2 6 4 12 4 22 0 8-6 14-15 14-6 0-10-4-12-12-2-10 4-18-2-27z" fill="#6b5243"/><path d="M34 28c6 2 10 0 14-4l3 14-8 16c-8-2-11-12-9-26z" fill="#b39c86"/><circle cx="48" cy="48" r="12" fill="#5fb1b6"/><text x="48" y="53" class="t" font-size="13" font-weight="600" fill="#fff" text-anchor="middle">CE</text></svg></div>
  <div class="app run"><svg viewBox="0 0 68 68"><rect width="68" height="68" rx="15.500" fill="#fff"/><circle cx="33" cy="39" r="16" fill="none" stroke="url(#gD)" stroke-width="10.500"/><path d="M49.500 13v26" stroke="#4b32c8" stroke-width="10" stroke-linecap="round"/></svg></div>
  <div class="app run"><svg viewBox="0 0 68 68"><rect width="68" height="68" rx="15.500" fill="#a3b0b5"/><rect x="2.500" y="2.500" width="63" height="63" rx="13" fill="#000"/><rect x="6.500" y="7" width="55" height="54" rx="9" fill="#262626"/><path d="M11 13l8 5-8 5" fill="none" stroke="#fff" stroke-width="2.600"/><path d="M23 26h9" stroke="#fff" stroke-width="2.600"/></svg></div>
  <div class="app run"><svg viewBox="0 0 68 68"><rect width="68" height="68" rx="15.500" fill="#000"/><path d="M34 10l20 12v24L34 58 14 46V22z" fill="#6b6b6b"/><path d="M34 10l20 12H14z" fill="#3c3c3c"/><path d="M14 22h40L34 58V34z" fill="#f6f6f6"/><path d="M14 22l20 12v24L14 46z" fill="#8e8e8e"/><path d="M54 22v24L34 58z" fill="#555"/></svg></div>
  <div class="app run"><svg viewBox="0 0 68 68"><rect width="68" height="68" rx="15.500" fill="#fff"/><svg x="9" y="4" width="50" height="60" fill="url(#gBrave)"><use href="#lion"/></svg></svg></div>
  <i class="div"></i>
  <div class="app tall"><svg viewBox="0 0 68 84"><path d="M7 4h34l13 22v56H7z" fill="#fafafa"/><path d="M36 4h12v26L36 27z" fill="#e3e3e3"/><path d="M9 5h17v5H9z" fill="#4b87a0"/><rect x="17" y="37" width="32" height="35" rx="2" fill="#8fa2ac"/><circle cx="33" cy="54" r="9" fill="#a9bac2"/><rect x="19" y="66" width="28" height="6" fill="#3b4348"/></svg></div>
  <div class="app tall"><svg viewBox="0 0 68 84"><path d="M5 16l10-12 10 6 9-7 12 8 12-5 6 10v8H5z" fill="#d9d9d6"/><path d="M12 12l8 8M28 9l7 10M46 8l6 12M20 6l-2 12M39 8l-4 10" stroke="#6b5f58" stroke-width="3"/><circle cx="27" cy="14" r="4" fill="#4da7c0"/><path d="M4 18h60l-6 58c-1 4-3 6-7 6H17c-4 0-6-2-7-6z" fill="#e4e4e2"/><path d="M14 24l4 50M34 24l-3 50M54 24l-6 50" stroke="#cfcfcc" stroke-width="3" fill="none"/></svg></div>
</footer>
</body>
</html>
```
FILE: styles.css
```css
* { box-sizing: border-box; margin: 0; padding: 0; }
body { width: 3456px; height: 2234px; overflow: hidden; position: relative; display: flex; flex-direction: column; background: #000; font-family: Inter, "Liberation Sans", sans-serif; }
.defs { position: absolute; }
svg { display: block; flex: none; overflow: visible; }
i, em { font-style: normal; }

/* system menu bar */
.menubar { height: 76px; border-bottom: 2px solid #000; flex: none; display: flex; justify-content: space-between; background: linear-gradient(90deg, #52564a 0, #4c4d40 32%, #4b4738 49%, #454636 62%, #3f443c 80%, #3a403b); color: #fff; font-size: 26px; font-weight: 500; line-height: 74px; letter-spacing: -.6px; text-shadow: 0 3px 6px rgba(0,0,0,.35); }
.menus { display: grid; grid-template-columns: 109px 113px 84px 89px 99px 129px 176px 132px 83px 139px 80px; white-space: nowrap; }
.menus b { font-weight: 700; letter-spacing: -.2px; }
.apple { width: 34px; height: 34px; margin: 18px 0 0 37px; }
.status { display: grid; grid-template-columns: 72px 72px 196px 74px 84px 60px 80px 62px 70px 72px 150px 70px 64px 64px 270px; align-items: center; justify-items: center; white-space: nowrap; }
.timer, .batt, .date { display: flex; align-items: center; justify-self: start; }
.timer { padding-left: 18px; }
.timer .pct { color: #5fc04c; margin-left: 8px; }
.timer svg { margin-right: 5px; }
.batt { font-size: 22px; padding-left: 18px; }
.batt svg { margin-left: 10px; }
.date { padding-left: 15px; }
.date .clock { margin-left: 17px; letter-spacing: -1.2px; }

/* browser window */
.window { height: 2038px; flex: none; display: flex; flex-direction: column; background: #fff; border-radius: 20px 20px 22px 22px; overflow: hidden; }
.tabstrip { height: 80px; flex: none; background: #e4e3e8; border-top: 2px solid #f6f6f8; padding-bottom: 2px; display: flex; align-items: center; color: #6e6e73; font-size: 24px; letter-spacing: -.15px; }
.lights { display: flex; gap: 16px; padding: 2px 0 0 42px; width: 199px; }
.lights i { width: 24px; height: 24px; border-radius: 50%; }
.red { background: #ed6a5e; }
.yel { background: #f5bf4f; }
.grn { background: #61c554; }
.tab { width: 493px; height: 64px; display: flex; align-items: center; padding-left: 30px; white-space: nowrap; overflow: hidden; }
.tab span { margin-left: 18px; }
.tab.first { width: 463px; padding-left: 0; }
.tab.first .fade { margin-left: 14px; width: 398px; }
.tab.sep, .tab.last { position: relative; }
.tab.sep::before, .tab.last::after { content: ""; position: absolute; left: 0; top: 16px; width: 2px; height: 32px; background: #c9c8ce; }
.tab.last::after { left: auto; right: 0; }
.tab.active { width: 486px; margin-left: 1px; background: #fff; border-radius: 16px; color: #3c3c40; padding-left: 26px; }
.tab.active .x { margin-left: auto; margin-right: 25px; }
.tab.last { width: 497px; padding-left: 30px; }
.tab.last span { margin-left: 16px; width: 396px; }
.fade { overflow: hidden; -webkit-mask-image: linear-gradient(90deg, #000 88%, transparent 100%); mask-image: linear-gradient(90deg, #000 88%, transparent 100%); }
.plus { margin-left: 26px; }
.toolbar { height: 82px; flex: none; background: #fff; border-bottom: 2px solid #e1e0e4; display: flex; align-items: center; }
.navs { display: flex; padding-left: 14px; width: 546px; }
.bm { margin-right: 32px; }
.url { width: 2160px; height: 64px; border-radius: 16px; background: #eeedf2; display: flex; align-items: center; padding-left: 19px; }
.addr { margin-left: 32px; width: 1891px; font-size: 28px; letter-spacing: .145px; color: #1f1f24; white-space: nowrap; }
.url .bar, .exts .bar { width: 2px; height: 32px; background: #c6c6cc; }
.url .bar { margin: 0 22px 0 20px; }
.bat { position: relative; margin-left: 34px; }
.bat em { position: absolute; left: 22px; top: -10px; width: 24px; height: 25px; border-radius: 8px; background: #ea5f38; color: #fff; font-size: 18px; line-height: 25px; text-align: center; }
.exts { display: flex; align-items: center; margin-left: 233px; gap: 24px; }
.exts svg { fill: none; stroke: #5f6166; stroke-width: 2.8; stroke-linejoin: round; }
.exts .bar { margin: 0 5px; background: #dddde2; }

/* web page */
.page { flex: 1; position: relative; display: flex; overflow: hidden; background: #f8fafc; font-family: Roboto, "Liberation Sans", sans-serif; }
.banner { position: absolute; left: 0; right: 0; top: 0; height: 90px; z-index: 2; background: #193f7d; border-bottom: 2px solid #32538c; box-shadow: 0 4px 22px rgba(0,0,0,.2); color: #fff; display: flex; align-items: center; justify-content: space-between; padding: 0 50px 0 32px; font-family: Inter, sans-serif; font-size: 27.24px; }
.banner a { text-decoration: underline; font-weight: 500; }
.ic { width: 36px; height: 36px; fill: none; stroke: currentColor; stroke-width: 2; stroke-linecap: round; stroke-linejoin: round; }
.side { width: 576px; flex: none; background: #fff; border-right: 2px solid #e2e8f0; padding: 36.5px 36px 0; display: flex; flex-direction: column; }
.item { height: 90px; flex: none; margin-bottom: 9px; border-radius: 13.5px; padding-left: 27px; display: flex; align-items: center; gap: 45px; font-size: 31.5px; font-weight: 500; color: #334155; }
.item.on { background: #3b83b8; color: #fff; }
h6 { height: 45px; flex: none; margin: 31.5px 0 22.5px; display: flex; align-items: center; gap: 27px; font-size: 27px; font-weight: 500; letter-spacing: 1.35px; color: #64748b; }
h6::before { content: ""; flex: 1; height: 2px; background: #e2e8f0; }
.content { flex: 1; display: flex; gap: 36px; padding: 0 54px; height: 1530px; }
.card { background: #fff; border: 2px solid #e5e5e5; border-top: 0; border-radius: 0 0 18px 18px; box-shadow: 0 2px 5px rgba(0,0,0,.06); color: #625c59; }
.channels { width: 720px; flex: none; padding-top: 115px; }
.chead { display: flex; align-items: center; justify-content: space-between; padding: 0 72px 0 54px; height: 93px; }
h3 { font-size: 40.5px; font-weight: 600; letter-spacing: -1.01px; line-height: 54px; }
.chead p { font-size: 27px; line-height: 36px; margin-top: 4px; }
.rows { padding: 46px 18px 0; display: flex; flex-direction: column; gap: 9px; }
.row { height: 140.2px; border-radius: 13.5px; display: flex; align-items: center; padding: 0 0 0 27px; white-space: nowrap; }
.row > div { padding-left: 27px; }
.row h4 { font-size: 31.5px; line-height: 45px; font-weight: 500; display: flex; align-items: center; }
.row p { font-size: 27px; line-height: 36px; font-weight: 500; }
.box { width: 72px; height: 72px; margin-bottom: 9px; border-radius: 13.5px; background: #ebf2f9; color: #3b83b8; display: grid; place-items: center; }
.box.orange { background: #fcecd9; color: #923a1c; }
.box.yellow { background: #fbf1cd; color: #87421b; margin-bottom: 13px; }
.sel { background: #3b83b8; }
.sel .box { background: none; }
.sel h4 { color: #fff; }
.badge { margin-left: 18px; height: 49px; width: 128px; border-radius: 25px; background: #e89a56; font-size: 27px; font-weight: 600; line-height: 48px; text-align: center; }
.chat { flex: 1; padding-top: 114px; }
.chat h3 { padding-left: 54px; height: 86px; }
.inner { height: 1200px; border: 2px solid #e5e5e5; border-radius: 18px; display: flex; flex-direction: column; box-shadow: 0 2px 4px rgba(0,0,0,.04); }
.ihead { height: 198px; flex: none; border-bottom: 2px solid #e5e5e5; display: flex; align-items: center; padding-left: 63px; }
.ihead .big { width: 72px; height: 72px; margin: 0 27px 0 54px; color: #4b83ee; }
.ihead > div { padding-top: 9px; }
h2 { font-size: 63px; font-weight: 700; line-height: 72px; }
.ihead p { font-size: 27px; line-height: 36px; color: #4b5563; margin-top: 9px; }
.msgs { height: 762px; flex: none; overflow: hidden; display: flex; flex-direction: column; justify-content: flex-end; gap: 36px; padding: 0 36px 72px; }
.msg { height: 99px; flex: none; display: flex; gap: 27px; }
.msg > div { flex: 1; }
.av { width: 72px; height: 72px; border-radius: 50%; background: #6b7280; color: #fff; font-size: 27px; line-height: 72px; text-align: center; }
.msg small { display: block; font-size: 27px; line-height: 36px; color: #6b7280; padding-left: 18px; margin-bottom: 9px; }
.msg p { height: 54px; border-radius: 18px; background: #f3f4f6; }
.compose { flex: 1; border-top: 2px solid #e5e5e5; padding: 36px 36px 0; }
.as { display: flex; gap: 19px; font-size: 31.5px; line-height: 45px; color: #4b5563; }
.as b { font-weight: 500; color: #111827; }
.line { display: flex; gap: 18px; margin-top: 27px; }
.input { flex: 1; height: 90px; border: 2px solid #f1f2f3; border-radius: 13.5px; padding-left: 27px; font-size: 31.5px; line-height: 88px; }
.btn { width: 108px; height: 90px; border-radius: 13.5px; background: #9dc1db; color: #fff; display: grid; place-items: center; }

/* desktop below the window */
.desk { flex: 1; display: flex; justify-content: flex-end; background: linear-gradient(180deg, #1d1a30 0 8px, rgba(0,0,0,.75) 10px, transparent 40px), linear-gradient(90deg, #182014 0, #26341f 12%, #16221f 26%, #2c3b22 38%, #203018 49%, #2e1c12 54%, #1c120c 72%, #2a1c14 77%, #1d2a2a 84%, #6b4a3a 91%, #14140f 93%); }
.sticky { width: 277px; margin-top: 8px; background: linear-gradient(180deg, #0b0b06, #6a6744 30px, #d9d28d 62px, #f0e796 90px); overflow: hidden; font: bold 22px/36px "Liberation Sans", sans-serif; color: #0c0c08; white-space: nowrap; padding-top: 12px; display: flex; flex-direction: column; }
.sticky p:first-child { margin-left: 207px; }
.sticky .git { margin: 47px 0 0 24px; }

/* dock */
.dock { position: absolute; left: 70px; top: 2118px; width: 3316px; height: 106px; border-radius: 34px; border: 2px solid rgba(190,195,180,.45); box-shadow: 0 -6px 60px rgba(0,0,0,.28); background: linear-gradient(90deg, #5d6656 0, #596156 8%, #5f6a58 22%, #595f5e 27%, #636f58 37%, #66735a 42%, #5f5d58 48%, #625c58 60%, #5f5c58 71%, #5d6763 82%, #63665f 87%, #7a6b5e 92%, #a09a6c 95%, #bcb57c); display: flex; padding-left: 4px; }
.app { width: 87.2px; height: 100%; flex: none; position: relative; display: flex; justify-content: center; padding-top: 14px; }
.app > svg { width: 68px; height: 68px; filter: drop-shadow(0 1px 2px rgba(0,0,0,.3)); }
.app.tall { padding-top: 6px; }
.app.tall > svg { height: 84px; }
.run::after { content: ""; position: absolute; left: 39.6px; top: 92px; width: 8px; height: 8px; border-radius: 50%; background: #000; }
.app em { position: absolute; z-index: 1; right: 0; top: 6px; min-width: 32px; height: 32px; padding: 0 5px; border-radius: 16px; background: #e24b3c; color: #fff; font-size: 19px; letter-spacing: -1px; line-height: 32px; text-align: center; }
.div { width: 39px; flex: none; display: flex; justify-content: center; }
.div::before { content: ""; width: 2px; height: 78px; margin-top: 12px; background: rgba(30,30,25,.55); }
.t { font-family: Inter, sans-serif; }
```
